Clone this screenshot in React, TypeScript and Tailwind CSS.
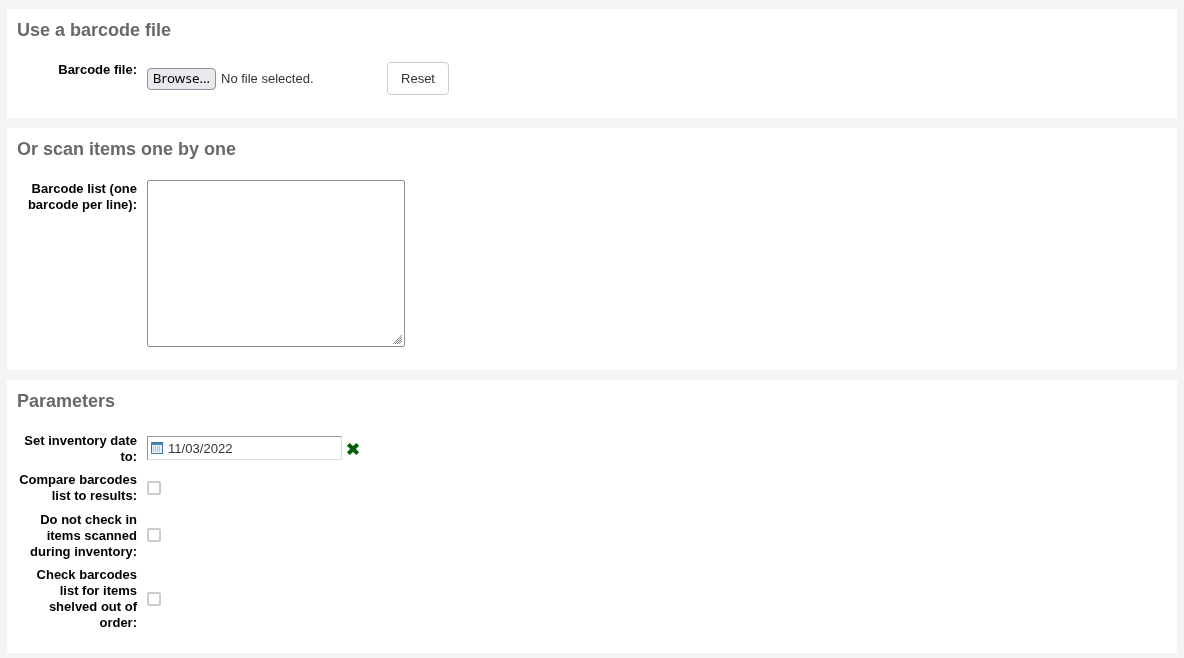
const labelClass = 'w-[120px] shrink-0 text-right text-[13px] leading-4 font-bold text-black'

function Panel({ title, className, children }: { title: string; className: string; children: React.ReactNode }) {
  return (
    <div className={`bg-white px-2.5 pt-[11px] ${className}`}>
      <h2 className="text-[18px] leading-[21px] font-bold text-[#696969]">{title}</h2>
      {children}
    </div>
  )
}

function Check({ rowClass, boxClass, label }: { rowClass: string; boxClass?: string; label: string }) {
  return (
    <div className={`flex items-center gap-2.5 ${rowClass}`}>
      <div className={labelClass}>{label}</div>
      <div className={`h-3.5 w-3.5 rounded-[2px] border-2 border-[#cccccc] bg-white ${boxClass ?? ''}`} />
    </div>
  )
}

function CalendarIcon() {
  return (
    <svg width="12" height="12" viewBox="0 0 12 12" className="shrink-0">
      <rect x="0.5" y="0.5" width="11" height="11" fill="#eaf2f9" stroke="#3f78ad" />
      <rect x="1" y="1" width="10" height="2" fill="#4a85ba" />
      <path d="M2 5h8M2 7h8M2 9h8" stroke="#6f8fb0" strokeDasharray="1 1" />
    </svg>
  )
}

export default function App() {
  return (
    <div className="h-[658px] overflow-hidden bg-[#f3f4f4] px-[7px] pt-[9px] font-['Liberation_Sans',Arial,sans-serif] will-change-transform">
      <Panel title="Use a barcode file" className="mb-2.5 h-[109px]">
        <div className="mt-5 flex gap-2.5">
          <div className={`${labelClass} pt-[1px]`}>Barcode file:</div>
          <div className="mt-[1px] flex items-center">
            <div className="flex h-[22px] w-[69px] items-center justify-center rounded-[4px] border border-[#8f8f9d] bg-[#e9e9ed] font-['Noto_Sans',sans-serif] text-[13.33px] tracking-[0.1px] text-black">
              Browse…
            </div>
            <span className="ml-[5px] w-[166px] text-[13px] text-[#333333]">No file selected.</span>
            <button className="h-[33px] w-[62px] rounded-[4px] border border-[#cccccc] bg-white text-[13px] text-[#333333]">
              Reset
            </button>
          </div>
        </div>
      </Panel>

      <Panel title="Or scan items one by one" className="mb-2.5 h-[242px]">
        <div className="mt-5 flex gap-2.5">
          <div className={`${labelClass} pt-[1px]`}>Barcode list (one barcode per line):</div>
          <div className="relative h-[167px] w-[258px]">
            <textarea className="block h-full w-full resize-none rounded-[2px] border border-[#8f8f9d] bg-white" />
            <svg width="11" height="11" viewBox="0 0 11 11" className="absolute right-[2px] bottom-[2px]">
              <path d="M10 1 1 10M10 3 3 10M10 5 5 10M10 7 7 10" stroke="#8a8a8a" strokeWidth="1" />
            </svg>
          </div>
        </div>
      </Panel>

      <Panel title="Parameters" className="h-[273px]">
        <div className="mt-[18px] flex gap-2.5">
          <div className={`${labelClass} pt-[3px]`}>Set inventory date to:</div>
          <div className="mt-[6px] flex items-center self-start">
            <div className="flex h-[24px] w-[195px] items-center gap-[5px] border border-[#dddddd] border-t-[#999999] border-l-[#999999] bg-white pl-[3px] text-[13.1px] text-[#333333]">
              <CalendarIcon />
              <span className="pt-[2px]">11/03/2022</span>
            </div>
            <svg width="14" height="14" viewBox="0 0 12 12" className="mt-[2px] ml-[4px]">
              <path d="M1.5 3.2 3.2 1.5 6 4.3 8.8 1.5l1.7 1.7L7.7 6l2.8 2.8-1.7 1.7L6 7.7l-2.8 2.8-1.7-1.7L4.3 6Z" fill="#006100" stroke="#006100" />
            </svg>
          </div>
        </div>
        <Check rowClass="mt-[7px]" label="Compare barcodes list to results:" />
        <Check rowClass="mt-[8px]" boxClass="-mt-[2px]" label="Do not check in items scanned during inventory:" />
        <Check rowClass="mt-[7px]" label="Check barcodes list for items shelved out of order:" />
      </Panel>
    </div>
  )
}
